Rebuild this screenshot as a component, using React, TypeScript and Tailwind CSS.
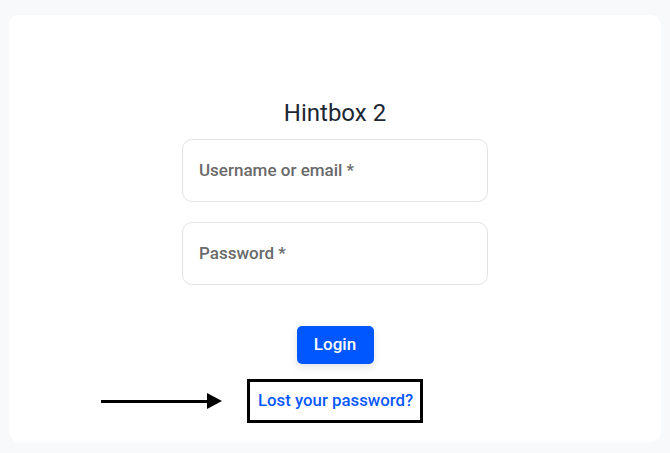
const LoginField = ({ label }: { label: string }) => {
  return (
    <div className="w-[306px] h-[63px] flex items-center px-4 border border-[#e3e3e3] rounded-[10px] bg-white">
      <span className="text-[17px] font-medium text-[#6a6a6a]">{label}</span>
    </div>
  );
};

const App = () => {
  return (
    <div
      className="w-[670px] h-[453px] bg-[#f8f9fb] pt-[15px] px-[9px]"
      style={{ fontFamily: "Roboto, 'Liberation Sans', sans-serif" }}
    >
      <div className="h-[427px] bg-white rounded-[10px] flex flex-col items-center pt-[82px]">
        <h1 className="text-[24px] leading-[32px] text-[#1c2733]">Hintbox 2</h1>
        <div className="mt-[10px] flex flex-col gap-5">
          <LoginField label="Username or email *" />
          <LoginField label="Password *" />
        </div>
        <button className="mt-[41px] w-[77px] h-[38px] rounded-[5px] bg-[#0057ff] text-white text-[17px] font-medium shadow-[0_3px_8px_rgba(0,0,0,0.12)]">
          Login
        </button>
        <div className="relative mt-[15px]">
          <a className="flex items-center h-[44px] w-[176px] pl-2 border-[3px] border-black text-[16.8px] font-medium text-[#0a58ff]">
            Lost your password?
          </a>
          <div className="absolute left-[-146px] top-[14px] w-[121px] h-[16px] flex items-center">
            <div className="flex-1 h-[3px] bg-black" />
            <svg width="15" height="16" viewBox="0 0 15 16" className="block">
              <polygon points="0,0 15,8 0,16" fill="black" />
            </svg>
          </div>
        </div>
      </div>
    </div>
  );
};

export default App;
